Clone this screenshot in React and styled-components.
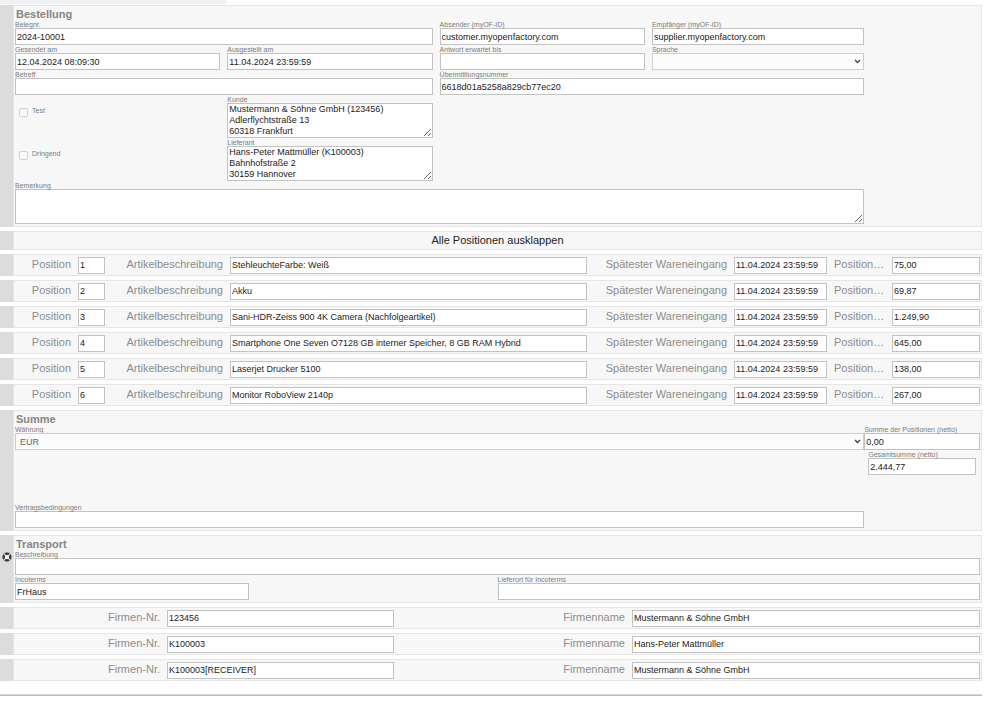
import React from "react"
import styled, { createGlobalStyle } from "styled-components"

const GlobalStyle = createGlobalStyle`
    * {
        box-sizing: border-box;
    }
    body {
        margin: 0;
        background-color: #fff;
        color: #222;
        font-family: "Liberation Sans", Arial, sans-serif;
        font-size: 9px;
    }
    input, select, textarea, button {
        font-family: inherit;
        color: inherit;
        margin: 0;
    }
`

const Page = styled.div`
    padding-right: 24px;
`

const TopStrip = styled.div`
    width: 23%;
    height: 4px;
    margin-bottom: 1px;
    background-color: #f0f1f5;
`

const Form = styled.form`
    display: flex;
    flex-direction: column;
    gap: 4px;
`

const Panel = styled.section`
    display: grid;
    grid-template-columns: 13px minmax(0, 1fr);
`

const Handle = styled.div`
    display: flex;
    align-items: flex-start;
    justify-content: center;
    padding-top: 17px;
    background-color: #dcdcdc;
    svg {
        display: block;
    }
`

const PanelBody = styled.div`
    padding: 0 1px 2px;
    border: 1px solid #e6e6e6;
    background-color: #f7f7f7;
`

const Title = styled.h2`
    margin: 0;
    padding: 2px 1px 0;
    height: 14px;
    font-size: 11px;
    line-height: 13px;
    font-weight: bold;
    color: #858585;
`

const FieldGrid = styled.div`
    display: grid;
    grid-template-columns: ${({ $columns }) => $columns};
`

const FieldBox = styled.div`
    grid-column: span ${({ $span }) => $span || 1};
    padding-right: ${({ $gutter }) => $gutter ? "7px" : "0"};
    ${({ $inset }) => $inset && "padding: 0 4px;"}
    min-width: 0;
`

const FieldLabel = styled.label`
    display: block;
    height: 8px;
    font-size: 7px;
    line-height: 10px;
    white-space: nowrap;
    color: #7c7c7c;
`

const TextInput = styled.input`
    display: block;
    width: 100%;
    height: 17px;
    padding: 0 1px;
    border: 1px solid #c2c2c2;
    border-radius: 0;
    background-color: #fff;
    font-size: 9px;
    outline: none;
`

const TextBox = styled.textarea`
    display: block;
    width: 100%;
    height: 35px;
    padding: 0 1px;
    border: 1px solid #c2c2c2;
    border-radius: 0;
    background-color: #fff;
    font-size: 9px;
    line-height: 11px;
    overflow: hidden;
    outline: none;
`

const SelectWrap = styled.div`
    position: relative;
    svg {
        position: absolute;
        top: 6px;
        right: 3px;
        pointer-events: none;
    }
`

const SelectBox = styled.select`
    display: block;
    appearance: none;
    width: 100%;
    height: 17px;
    padding: 0 4px;
    border: 1px solid #cfcfcf;
    border-radius: 0;
    background-color: #fcfcfc;
    color: #666;
    font-size: 9px;
    outline: none;
`

const CheckField = styled.div`
    display: flex;
    align-items: flex-start;
    gap: 4px;
    padding: 11px 0 0 4px;
    label {
        font-size: 7px;
        line-height: 10px;
        color: #7c7c7c;
    }
`

const CheckBox = styled.input`
    appearance: none;
    width: 9px;
    height: 9px;
    margin-top: 2px;
    border: 1px solid #d2d2d2;
    border-radius: 2px;
    background-color: #fafafa;
`

const Empty = styled.div`
    grid-column: span ${({ $span }) => $span || 1};
`

const Spacer = styled.div`
    height: 28px;
`

const ExpandButton = styled.button`
    height: 19px;
    padding: 0;
    border: 1px solid #e6e6e6;
    background-color: #f7f7f7;
    color: #222;
    font-size: 11px;
    line-height: 15px;
    cursor: pointer;
`

const RowBody = styled.div`
    display: grid;
    grid-template-columns: ${({ $columns }) => $columns};
    column-gap: 7px;
    align-items: center;
    height: 22px;
    padding: 0 1px;
    border: 1px solid #e6e6e6;
    background-color: #f7f7f7;
`

const RowLabel = styled.label`
    overflow: hidden;
    padding-bottom: 2px;
    font-size: 11px;
    line-height: 14px;
    text-align: ${({ $left }) => $left ? "left" : "right"};
    white-space: nowrap;
    color: #8c8c8c;
`

const Rule = styled.hr`
    height: 2px;
    margin: 13px 0 0;
    border: 0;
    border-top: 1px solid #d3d6dc;
    background-color: #b9bec6;
`

const tracks = (...sizes) => sizes.map(size => `minmax(0, ${size}fr)`).join(" ")

const ORDER_COLUMNS = tracks(22, 22, 22, 22, 12)
const SUM_COLUMNS = tracks(88, 12)
const TRANSPORT_COLUMNS = tracks(1, 1, 2)
const POSITION_COLUMNS = tracks(56, 27, 111, 357, 133, 93, 51, 88)
const COMPANY_COLUMNS = tracks(145, 227, 224, 348)

const positions = [
    { id: "1", text: "StehleuchteFarbe: Weiß", date: "11.04.2024 23:59:59", value: "75,00" },
    { id: "2", text: "Akku", date: "11.04.2024 23:59:59", value: "69,87" },
    { id: "3", text: "Sani-HDR-Zeiss 900 4K Camera (Nachfolgeartikel)", date: "11.04.2024 23:59:59", value: "1.249,90" },
    { id: "4", text: "Smartphone One Seven O7128 GB interner Speicher, 8 GB RAM Hybrid", date: "11.04.2024 23:59:59", value: "645,00" },
    { id: "5", text: "Laserjet Drucker 5100", date: "11.04.2024 23:59:59", value: "138,00" },
    { id: "6", text: "Monitor RoboView 2140p", date: "11.04.2024 23:59:59", value: "267,00" }
]

const companies = [
    { number: "123456", name: "Mustermann & Söhne GmbH" },
    { number: "K100003", name: "Hans-Peter Mattmüller" },
    { number: "K100003[RECEIVER]", name: "Mustermann & Söhne GmbH" }
]

const Chevron = () => (
    <svg width="7" height="5" viewBox="0 0 7 5" fill="none" stroke="#444" strokeWidth="1.4">
        <path d="M1 1l2.5 2.5L6 1" />
    </svg>
)

const RemoveIcon = () => (
    <svg width="10" height="10" viewBox="0 0 10 10">
        <circle cx="5" cy="5" r="3.4" fill="none" stroke="#3a3a3a" strokeWidth="2.4" />
        <path d="M1.6 1.6l6.8 6.8M8.4 1.6L1.6 8.4" stroke="#dcdcdc" strokeWidth="1.2" />
        <circle cx="5" cy="5" r="2.1" fill="#f4f4f4" />
    </svg>
)

const Field = ({ id, label, value = "", span, gutter, inset }) => (
    <FieldBox $span={span} $gutter={gutter} $inset={inset}>
        <FieldLabel htmlFor={id}>{label}</FieldLabel>
        <TextInput id={id} type="text" defaultValue={value} />
    </FieldBox>
)

const AreaField = ({ id, label, value = "", span, gutter }) => (
    <FieldBox $span={span} $gutter={gutter}>
        <FieldLabel htmlFor={id}>{label}</FieldLabel>
        <TextBox id={id} defaultValue={value} />
    </FieldBox>
)

const SelectField = ({ id, label, options }) => (
    <FieldBox>
        <FieldLabel htmlFor={id}>{label}</FieldLabel>
        <SelectWrap>
            <SelectBox id={id}>
                {options.map(option => <option key={option}>{option}</option>)}
            </SelectBox>
            <Chevron />
        </SelectWrap>
    </FieldBox>
)

const Check = ({ id, label }) => (
    <CheckField>
        <CheckBox id={id} type="checkbox" disabled />
        <label htmlFor={id}>{label}</label>
    </CheckField>
)

const RowField = ({ id, label, value, left }) => (
    <>
        <RowLabel htmlFor={id} $left={left}>{label}</RowLabel>
        <TextInput id={id} type="text" defaultValue={value} />
    </>
)

const App = () => (
    <Page>
        <GlobalStyle />
        <TopStrip />
        <Form onSubmit={e => e.preventDefault()}>
            <Panel>
                <Handle />
                <PanelBody>
                    <Title>Bestellung</Title>
                    <FieldGrid $columns={ORDER_COLUMNS}>
                        <Field id="number" label="Belegnr." value="2024-10001" span={2} gutter />
                        <Field id="sender" label="Absender (myOF-ID)" value="customer.myopenfactory.com" gutter />
                        <Field id="receiver" label="Empfänger (myOF-ID)" value="supplier.myopenfactory.com" />
                        <Empty />
                        <Field id="sent" label="Gesendet am" value="12.04.2024 08:09:30" gutter />
                        <Field id="issued" label="Ausgestellt am" value="11.04.2024 23:59:59" gutter />
                        <Field id="answer" label="Antwort erwartet bis" gutter />
                        <SelectField id="language" label="Sprache" options={[""]} />
                        <Empty />
                        <Field id="subject" label="Betreff" span={2} gutter />
                        <Field id="transfer" label="Übermittlungsnummer" value="6618d01a5258a829cb77ec20" span={2} />
                        <Empty />
                        <Check id="test" label="Test" />
                        <AreaField id="customer" label="Kunde" value={"Mustermann & Söhne GmbH (123456)\nAdlerflychtstraße 13\n60318 Frankfurt"} gutter />
                        <Empty $span={3} />
                        <Check id="urgent" label="Dringend" />
                        <AreaField id="supplier" label="Lieferant" value={"Hans-Peter Mattmüller (K100003)\nBahnhofstraße 2\n30159 Hannover"} gutter />
                        <Empty $span={3} />
                        <AreaField id="remark" label="Bemerkung" span={4} />
                    </FieldGrid>
                </PanelBody>
            </Panel>
            <Panel>
                <Handle />
                <ExpandButton type="button">Alle Positionen ausklappen</ExpandButton>
            </Panel>
            {positions.map(({ id, text, date, value }) => (
                <Panel key={id}>
                    <Handle />
                    <RowBody $columns={POSITION_COLUMNS}>
                        <RowField id={`position-${id}`} label="Position" value={id} />
                        <RowField id={`text-${id}`} label="Artikelbeschreibung" value={text} />
                        <RowField id={`date-${id}`} label="Spätester Wareneingang" value={date} />
                        <RowField id={`value-${id}`} label="Position…" value={value} left />
                    </RowBody>
                </Panel>
            ))}
            <Panel>
                <Handle />
                <PanelBody>
                    <Title>Summe</Title>
                    <FieldGrid $columns={SUM_COLUMNS}>
                        <SelectField id="currency" label="Währung" options={["EUR"]} />
                        <Field id="net" label="Summe der Positionen (netto)" value="0,00" />
                        <Empty />
                        <Field id="total" label="Gesamtsumme (netto)" value="2.444,77" inset />
                    </FieldGrid>
                    <Spacer />
                    <FieldGrid $columns={SUM_COLUMNS}>
                        <Field id="terms" label="Vertragsbedingungen" />
                    </FieldGrid>
                </PanelBody>
            </Panel>
            <Panel>
                <Handle>
                    <RemoveIcon />
                </Handle>
                <PanelBody>
                    <Title>Transport</Title>
                    <FieldGrid $columns={TRANSPORT_COLUMNS}>
                        <Field id="description" label="Beschreibung" span={3} />
                        <Field id="incoterms" label="Incoterms" value="FrHaus" gutter />
                        <Empty />
                        <Field id="place" label="Lieferort für Incoterms" />
                    </FieldGrid>
                </PanelBody>
            </Panel>
            {companies.map(({ number, name }) => (
                <Panel key={number}>
                    <Handle />
                    <RowBody $columns={COMPANY_COLUMNS}>
                        <RowField id={`number-${number}`} label="Firmen-Nr." value={number} />
                        <RowField id={`name-${number}`} label="Firmenname" value={name} />
                    </RowBody>
                </Panel>
            ))}
        </Form>
        <Rule />
    </Page>
)

export default App
